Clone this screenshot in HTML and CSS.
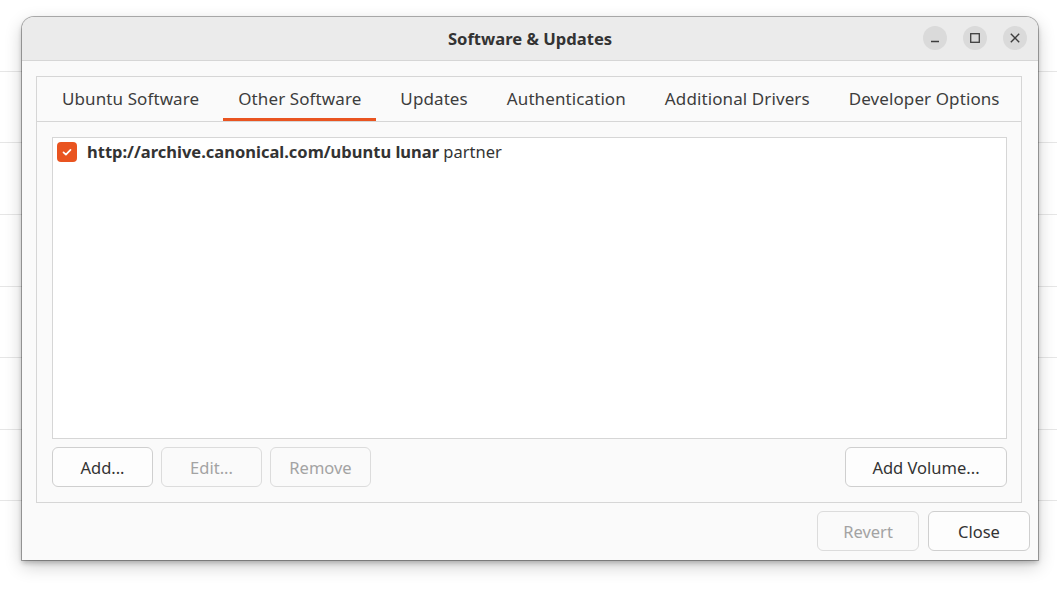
FILE: index.html
```html
<!DOCTYPE html>
<html>
<head>
<meta charset="utf-8">
<link rel="stylesheet" href="styles.css">
</head>
<body>
<div class="window">
  <header class="headerbar">
    <div class="title">Software &amp; Updates</div>
    <div class="wm-buttons">
      <span class="wm-btn"><svg width="12" height="12" viewBox="0 0 12 12"><path d="M2 9.5h8" stroke="#3d3d3d" stroke-width="1.3"/></svg></span>
      <span class="wm-btn"><svg width="12" height="12" viewBox="0 0 12 12"><rect x="1.7" y="1.7" width="8.6" height="8.6" fill="none" stroke="#3d3d3d" stroke-width="1.3"/></svg></span>
      <span class="wm-btn"><svg width="12" height="12" viewBox="0 0 12 12"><path d="M1.8 1.8l8.4 8.4M10.2 1.8l-8.4 8.4" stroke="#3d3d3d" stroke-width="1.4"/></svg></span>
    </div>
  </header>
  <main class="body">
    <section class="notebook">
      <nav class="tabs">
        <span class="tab">Ubuntu Software</span>
        <span class="tab active">Other Software</span>
        <span class="tab">Updates</span>
        <span class="tab">Authentication</span>
        <span class="tab">Additional Drivers</span>
        <span class="tab">Developer Options</span>
      </nav>
      <div class="page">
        <div class="list">
          <div class="row">
            <span class="check"><svg width="12" height="12" viewBox="0 0 12 12"><path d="M2.5 6.3l2.4 2.3 4.6-4.8" fill="none" stroke="#fff" stroke-width="1.7" stroke-linecap="round" stroke-linejoin="round"/></svg></span>
            <span class="src"><b>http://archive.canonical.com/ubuntu lunar</b> partner</span>
          </div>
        </div>
        <div class="list-actions">
          <button class="btn">Add...</button>
          <button class="btn disabled">Edit...</button>
          <button class="btn disabled">Remove</button>
          <span class="spacer"></span>
          <button class="btn wide">Add Volume...</button>
        </div>
      </div>
    </section>
    <div class="dialog-actions">
      <button class="btn disabled">Revert</button>
      <button class="btn">Close</button>
    </div>
  </main>
</div>
</body>
</html>
```

FILE: styles.css
```css
html, body {
  margin: 0;
  padding: 0;
}
body {
  width: 1057px;
  height: 594px;
  overflow: hidden;
  background:
    linear-gradient(#e6e6e6, #e6e6e6) 0 71px / 100% 1px no-repeat,
    linear-gradient(#e6e6e6, #e6e6e6) 0 142px / 100% 1px no-repeat,
    linear-gradient(#e6e6e6, #e6e6e6) 0 214px / 100% 1px no-repeat,
    linear-gradient(#e6e6e6, #e6e6e6) 0 286px / 100% 1px no-repeat,
    linear-gradient(#e6e6e6, #e6e6e6) 0 357px / 100% 1px no-repeat,
    linear-gradient(#e6e6e6, #e6e6e6) 0 429px / 100% 1px no-repeat,
    linear-gradient(#e6e6e6, #e6e6e6) 0 500px / 100% 1px no-repeat,
    #ffffff;
  font-family: "Noto Sans", "Open Sans", sans-serif;
  color: #3d3d3d;
  padding-top: 17px;
  padding-left: 22px;
  box-sizing: border-box;
}
.window {
  width: 1016px;
  height: 543px;
  background: #fafafa;
  border-radius: 12px 12px 0 0;
  box-shadow: 0 0 0 1px rgba(0,0,0,0.3), 0 3px 5px rgba(0,0,0,0.22), 0 6px 18px rgba(0,0,0,0.2);
  display: flex;
  flex-direction: column;
  overflow: hidden;
}
.headerbar {
  height: 44px;
  flex: none;
  box-sizing: border-box;
  background: #ebebeb;
  border-bottom: 1px solid #d6d6d6;
  display: flex;
  align-items: center;
  justify-content: center;
  position: relative;
}
.title {
  font-weight: bold;
  font-size: 16.6px;
  color: #333;
}
.wm-buttons {
  position: absolute;
  right: 11px;
  top: 9px;
  display: flex;
  gap: 16px;
}
.wm-btn {
  width: 24px;
  height: 24px;
  border-radius: 50%;
  background: #dadada;
  display: flex;
  align-items: center;
  justify-content: center;
}
.body {
  flex: 1;
  display: flex;
  flex-direction: column;
  padding: 15px 16px 9px 14px;
}
.notebook {
  height: 427px;
  box-sizing: border-box;
  border: 1px solid #d6d6d6;
  display: flex;
  flex-direction: column;
}
.tabs {
  height: 45px;
  flex: none;
  box-sizing: border-box;
  border-bottom: 1px solid #d6d6d6;
  display: flex;
  padding-left: 10px;
  gap: 9px;
}
.tab {
  font-size: 17px;
  letter-spacing: 0.1px;
  padding: 0 15px 2px;
  display: flex;
  align-items: center;
  box-sizing: border-box;
  height: 44px;
  color: #3d3d3d;
}
.tab.active {
  box-shadow: inset 0 -3px 0 #e95420;
}
.page {
  flex: 1;
  display: flex;
  flex-direction: column;
  padding: 15px 14px 14px 15px;
}
.list {
  height: 302px;
  box-sizing: border-box;
  background: #ffffff;
  border: 1px solid #d6d6d6;
  padding: 3px 4px;
}
.row {
  display: flex;
  align-items: center;
  gap: 10px;
  height: 22px;
}
.check {
  width: 20px;
  height: 20px;
  border-radius: 4px;
  background: #e95420;
  display: flex;
  align-items: center;
  justify-content: center;
}
.src {
  font-size: 16.5px;
  color: #333;
  margin-top: -2px;
}
.src b {
  font-weight: bold;
}
.list-actions {
  margin-top: 8px;
  display: flex;
  gap: 8px;
}
.spacer {
  flex: 1;
}
.btn {
  width: 101px;
  height: 40px;
  border: 1px solid #cfcfcf;
  border-radius: 6px;
  background: #fdfdfd;
  font-family: inherit;
  font-size: 16.5px;
  color: #333;
  padding: 0;
}
.btn.disabled {
  color: #a3a3a3;
  border-color: #dcdcdc;
  background: #fafafa;
}
.btn.wide {
  width: 162px;
}
.dialog-actions {
  margin-top: 8px;
  display: flex;
  justify-content: flex-end;
  gap: 9px;
  margin-right: -8px;
}
.dialog-actions .btn {
  width: 102px;
}
```
